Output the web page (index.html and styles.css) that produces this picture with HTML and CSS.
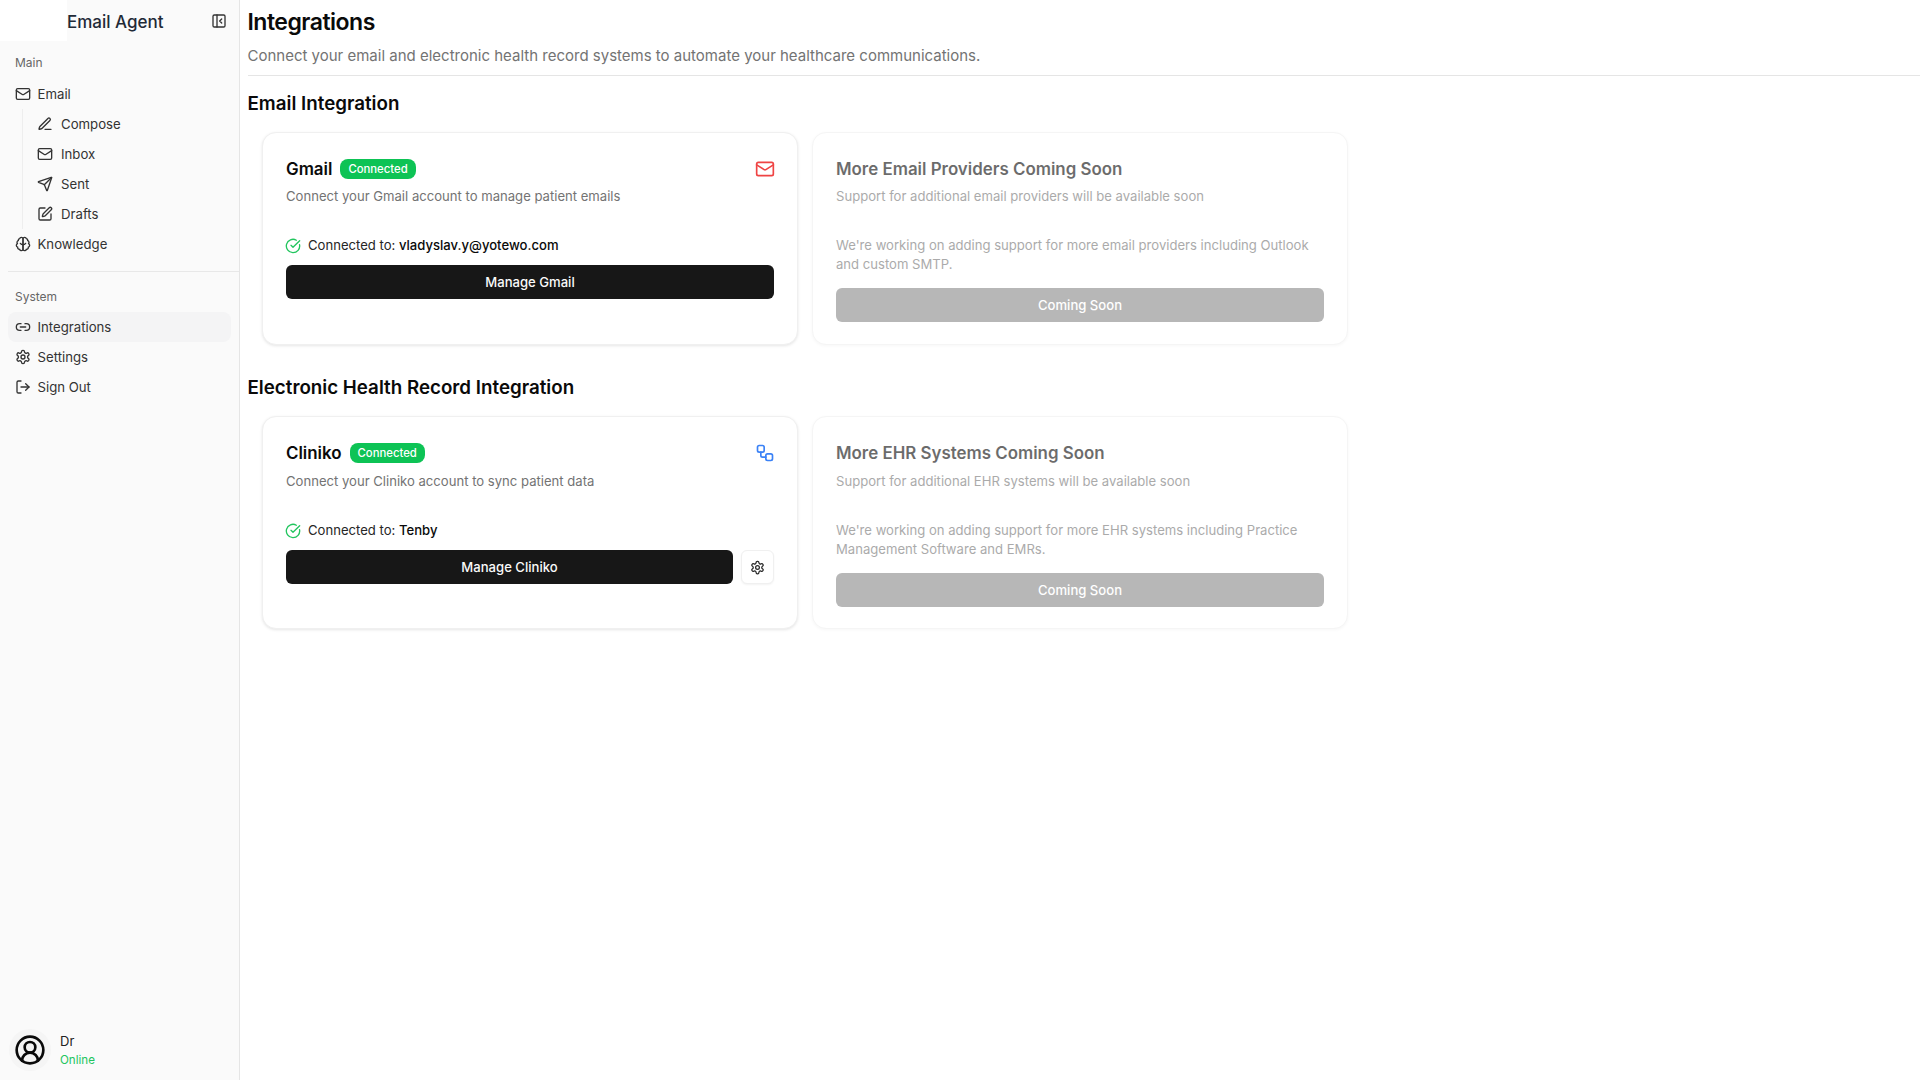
FILE: index.html
```html
<!DOCTYPE html>
<html lang="en">
<head>
<meta charset="utf-8">
<title>Integrations</title>
<link rel="stylesheet" href="styles.css">
</head>
<body>
<svg class="defs" aria-hidden="true">
<defs>
<symbol id="i-mail" viewBox="0 0 24 24"><rect x="2" y="4" width="20" height="16" rx="2"/><path d="m22 7-8.97 5.7a1.94 1.94 0 0 1-2.06 0L2 7"/></symbol>
<symbol id="i-pen" viewBox="0 0 24 24"><path d="M12 20h9"/><path d="M16.376 3.622a1 1 0 0 1 3.002 3.002L7.368 18.635a2 2 0 0 1-.855.506l-2.872.838a.5.5 0 0 1-.62-.62l.838-2.872a2 2 0 0 1 .506-.854z"/></symbol>
<symbol id="i-send" viewBox="0 0 24 24"><path d="M14.536 21.686a.5.5 0 0 0 .937-.024l6.5-19a.496.496 0 0 0-.635-.635l-19 6.5a.5.5 0 0 0-.024.937l7.93 3.18a2 2 0 0 1 1.112 1.11z"/><path d="m21.854 2.147-10.94 10.939"/></symbol>
<symbol id="i-square-pen" viewBox="0 0 24 24"><path d="M12 3H5a2 2 0 0 0-2 2v14a2 2 0 0 0 2 2h14a2 2 0 0 0 2-2v-7"/><path d="M18.375 2.625a1 1 0 0 1 3 3l-9.013 9.014a2 2 0 0 1-.853.505l-2.873.84a.5.5 0 0 1-.62-.62l.84-2.873a2 2 0 0 1 .506-.852z"/></symbol>
<symbol id="i-knowledge" viewBox="0 0 24 24"><path d="M9.5 2A2.5 2.5 0 0 1 12 4.5v15a2.5 2.5 0 0 1-4.96.44 2.5 2.5 0 0 1-2.96-3.08 3 3 0 0 1-.34-5.58 2.5 2.5 0 0 1 1.32-4.24 2.5 2.5 0 0 1 1.98-3A2.5 2.5 0 0 1 9.5 2Z"/><path d="M14.5 2A2.5 2.5 0 0 0 12 4.5v15a2.5 2.5 0 0 0 4.96.44 2.5 2.5 0 0 0 2.96-3.08 3 3 0 0 0 .34-5.58 2.5 2.5 0 0 0-1.32-4.24 2.5 2.5 0 0 0-1.98-3A2.5 2.5 0 0 0 14.5 2Z"/><path d="M12 13c-1.5 0-3-.6-4-2"/><path d="M12 13c1.5 0 3-.6 4-2"/></symbol>
<symbol id="i-link" viewBox="0 0 24 24"><path d="M9 17H7A5 5 0 0 1 7 7h2"/><path d="M15 7h2a5 5 0 1 1 0 10h-2"/><line x1="8" x2="16" y1="12" y2="12"/></symbol>
<symbol id="i-settings" viewBox="0 0 24 24"><path d="M12.22 2h-.44a2 2 0 0 0-2 2v.18a2 2 0 0 1-1 1.73l-.43.25a2 2 0 0 1-2 0l-.15-.08a2 2 0 0 0-2.73.73l-.22.38a2 2 0 0 0 .73 2.73l.15.1a2 2 0 0 1 1 1.72v.51a2 2 0 0 1-1 1.74l-.15.09a2 2 0 0 0-.73 2.73l.22.38a2 2 0 0 0 2.73.73l.15-.08a2 2 0 0 1 2 0l.43.25a2 2 0 0 1 1 1.73V20a2 2 0 0 0 2 2h.44a2 2 0 0 0 2-2v-.18a2 2 0 0 1 1-1.73l.43-.25a2 2 0 0 1 2 0l.15.08a2 2 0 0 0 2.73-.73l.22-.39a2 2 0 0 0-.73-2.73l-.15-.08a2 2 0 0 1-1-1.74v-.5a2 2 0 0 1 1-1.74l.15-.09a2 2 0 0 0 .73-2.73l-.22-.38a2 2 0 0 0-2.73-.73l-.15.08a2 2 0 0 1-2 0l-.43-.25a2 2 0 0 1-1-1.73V4a2 2 0 0 0-2-2z"/><circle cx="12" cy="12" r="3"/></symbol>
<symbol id="i-logout" viewBox="0 0 24 24"><path d="M9 21H5a2 2 0 0 1-2-2V5a2 2 0 0 1 2-2h4"/><polyline points="16 17 21 12 16 7"/><line x1="21" x2="9" y1="12" y2="12"/></symbol>
<symbol id="i-check" viewBox="0 0 24 24"><path d="M21.801 10A10 10 0 1 1 17 3.335"/><path d="m9 11 3 3L22 4"/></symbol>
<symbol id="i-workflow" viewBox="0 0 24 24"><rect x="3" y="3" width="8" height="8" rx="2"/><path d="M7 11v4a2 2 0 0 0 2 2h4"/><rect x="13" y="13" width="8" height="8" rx="2"/></symbol>
</defs>
</svg>
<div class="app">
  <aside class="sidebar">
    <header class="brand">
      <div class="logo-slot"></div>
      <span class="brand-name">Email Agent</span>
      <svg class="icon toggle" viewBox="0 0 24 24"><rect x="3" y="3" width="18" height="18" rx="2"/><path d="M9 3v18"/><path d="m16 15-3-3 3-3"/></svg>
    </header>
    <section class="nav-group">
      <div class="nav-label">Main</div>
      <a class="nav-item"><svg class="icon"><use href="#i-mail"/></svg>Email</a>
      <div class="sub-nav">
        <a class="nav-item"><svg class="icon"><use href="#i-pen"/></svg>Compose</a>
        <a class="nav-item"><svg class="icon"><use href="#i-mail"/></svg>Inbox</a>
        <a class="nav-item"><svg class="icon"><use href="#i-send"/></svg>Sent</a>
        <a class="nav-item"><svg class="icon"><use href="#i-square-pen"/></svg>Drafts</a>
      </div>
      <a class="nav-item"><svg class="icon"><use href="#i-knowledge"/></svg>Knowledge</a>
    </section>
    <div class="nav-sep"></div>
    <section class="nav-group system">
      <div class="nav-label">System</div>
      <a class="nav-item active"><svg class="icon"><use href="#i-link"/></svg>Integrations</a>
      <a class="nav-item"><svg class="icon"><use href="#i-settings"/></svg>Settings</a>
      <a class="nav-item"><svg class="icon"><use href="#i-logout"/></svg>Sign Out</a>
    </section>
    <footer class="user">
      <div class="avatar">
        <svg class="avatar-icon" viewBox="0 0 24 24"><circle cx="12" cy="12" r="10"/><circle cx="12" cy="10" r="4"/><path d="M18 20a6 6 0 0 0-12 0"/></svg>
      </div>
      <div class="user-text">
        <div class="user-name">Dr</div>
        <div class="user-status">Online</div>
      </div>
    </footer>
  </aside>
  <main class="main">
    <header class="page-head">
      <h1>Integrations</h1>
      <p>Connect your email and electronic health record systems to automate your healthcare communications.</p>
    </header>
    <section class="section">
      <h2>Email Integration</h2>
      <div class="cards">
        <article class="card">
          <div class="card-head">
            <div class="card-title"><h3>Gmail</h3><span class="badge">Connected</span></div>
            <svg class="icon brand-icon red"><use href="#i-mail"/></svg>
          </div>
          <p class="card-desc">Connect your Gmail account to manage patient emails</p>
          <div class="status"><svg class="icon check"><use href="#i-check"/></svg><span>Connected to: <span class="strong">vladyslav.y@yotewo.com</span></span></div>
          <div class="actions"><button class="btn">Manage Gmail</button></div>
        </article>
        <article class="card muted">
          <div class="card-head"><div class="card-title"><h3>More Email Providers Coming Soon</h3></div></div>
          <p class="card-desc">Support for additional email providers will be available soon</p>
          <p class="soon-text">We're working on adding support for more email providers including Outlook and custom SMTP.</p>
          <div class="actions"><button class="btn" disabled>Coming Soon</button></div>
        </article>
      </div>
    </section>
    <section class="section">
      <h2>Electronic Health Record Integration</h2>
      <div class="cards">
        <article class="card">
          <div class="card-head">
            <div class="card-title"><h3>Cliniko</h3><span class="badge">Connected</span></div>
            <svg class="icon brand-icon blue"><use href="#i-workflow"/></svg>
          </div>
          <p class="card-desc">Connect your Cliniko account to sync patient data</p>
          <div class="status"><svg class="icon check"><use href="#i-check"/></svg><span>Connected to: <span class="strong">Tenby</span></span></div>
          <div class="actions"><button class="btn">Manage Cliniko</button><button class="btn-icon"><svg class="icon"><use href="#i-settings"/></svg></button></div>
        </article>
        <article class="card muted">
          <div class="card-head"><div class="card-title"><h3>More EHR Systems Coming Soon</h3></div></div>
          <p class="card-desc">Support for additional EHR systems will be available soon</p>
          <p class="soon-text">We're working on adding support for more EHR systems including Practice Management Software and EMRs.</p>
          <div class="actions"><button class="btn" disabled>Coming Soon</button></div>
        </article>
      </div>
    </section>
  </main>
</div>
</body>
</html>
```
FILE: styles.css
```css
* { box-sizing: border-box; }
html, body { margin: 0; height: 100%; }
body { font-family: Inter, "Liberation Sans", sans-serif; color: #171717; background: #fff; overflow: hidden; }
.defs { position: absolute; width: 0; height: 0; }
.app { display: flex; height: 1080px; }
.icon { width: 16px; height: 16px; fill: none; stroke: currentColor; stroke-width: 2; stroke-linecap: round; stroke-linejoin: round; flex: none; }

.sidebar { width: 240px; flex: none; background: #fafafa; border-right: 1px solid #e5e5e5; display: flex; flex-direction: column; }
.brand { height: 41px; display: flex; align-items: center; position: relative; margin-bottom: 8px; }
.logo-slot { width: 67px; height: 41px; background: #fff; flex: none; }
.brand-name { font-size: 17px; font-weight: 500; color: #1f2a37; line-height: 24px; padding-top: 2px; }
.toggle { position: absolute; right: 12px; top: 13px; color: #333; }
.nav-group { padding: 0 8px; display: flex; flex-direction: column; }
.nav-label { font-size: 12px; line-height: 16px; color: #666; padding: 6px 7px 0; height: 30px; }
.system .nav-label { height: 29px; }
.nav-item { height: 30px; display: flex; align-items: center; gap: 6.5px; padding: 0 7px; font-size: 13.2px; color: #333; border-radius: 8px; }
.nav-item.active { background: #f4f4f5; }
.sub-nav { margin-left: 14px; padding-left: 7px; border-left: 1px solid #eeeeee; display: flex; flex-direction: column; }
.sub-nav .nav-item { gap: 8px; }
.nav-sep { height: 1px; background: #e8e8e8; margin: 12px 0 11px 8px; }
.user { margin-top: auto; height: 60px; display: flex; align-items: center; padding: 0 9px; gap: 9px; }
.avatar { width: 42px; height: 42px; border-radius: 50%; background: #f5f5f5; display: flex; align-items: center; justify-content: center; flex: none; }
.avatar-icon { width: 32px; height: 32px; fill: none; stroke: #0a0a0a; stroke-width: 2; stroke-linecap: round; stroke-linejoin: round; }
.user-name { font-size: 13px; line-height: 18px; color: #222; }
.user-status { font-size: 11.6px; line-height: 18px; margin-top: 1px; color: #22c55e; }

.main { flex: 1; padding: 0 0 0 7.5px; min-width: 0; }
.page-head { height: 76px; border-bottom: 1px solid #e5e5e5; }
.page-head h1 { margin: 0; font-size: 23px; line-height: 44px; font-weight: 600; color: #0a0a0a; letter-spacing: -0.5px; }
.page-head p { margin: 0; font-size: 15px; line-height: 24px; color: #737373; }
.section h2 { margin: 0; font-size: 18.75px; font-weight: 600; line-height: 28px; color: #0a0a0a; height: 56px; padding-top: 14px; }
.section + .section h2 { height: 71px; padding-top: 29px; }
.section + .section .card-desc { margin-top: 6px; }
.cards { display: grid; grid-template-columns: 536px 536px; gap: 14px; padding-left: 14.5px; }
.card { height: 213px; background: #fff; border: 1px solid #f0f0f0; border-radius: 14px; padding: 24px 23px 23px; box-shadow: 0 1px 3px rgba(0,0,0,.1); display: flex; flex-direction: column; }
.card-head { display: flex; align-items: center; justify-content: space-between; height: 24px; }
.card-title { display: flex; align-items: center; gap: 8px; }
.card h3 { margin: 0; font-size: 16.9px; line-height: 24px; font-weight: 600; color: #0a0a0a; }
.badge { background: #0dc355; color: #fff; font-size: 11.3px; font-weight: 500; line-height: 16px; padding: 2px 8px; border-radius: 8px; }
.brand-icon { width: 20px; height: 20px; margin-right: -1px; }
.red { color: #ef4444; }
.blue { color: #3b82f6; }
.card-desc { margin: 5px 0 0; font-size: 13.1px; line-height: 20px; color: #737373; }
.status { margin-top: 29px; display: flex; align-items: center; gap: 7px; font-size: 13.1px; line-height: 20px; color: #262626; height: 20px; }
.strong { color: #0a0a0a; font-weight: 500; }
.check { color: #22c55e; margin-top: 2px; margin-left: -1px; }
.actions { margin-top: 10px; display: flex; gap: 8px; }
.btn { flex: 1; height: 34px; border: 0; border-radius: 6px; background: #171717; color: #fafafa; font: 500 13.1px Inter, sans-serif; }
.btn-icon { width: 33px; height: 34px; flex: none; display: flex; align-items: center; justify-content: center; background: #fff; border: 1px solid #f0f0f0; border-radius: 6px; box-shadow: 0 1px 2px rgba(0,0,0,.05); color: #262626; padding: 0; }
.btn-icon .icon { width: 15px; height: 15px; }
.card.muted { opacity: .62; box-shadow: 0 1px 3px rgba(0,0,0,.05); }
.muted .card-desc, .muted .soon-text { color: #777; }
.soon-text { margin: 30px 0 0; font-size: 13.1px; line-height: 18.5px; }
.muted h3 { color: #111; }
.muted .actions { margin-top: 15px; }
.muted .btn { background: #8c8c8c; color: #fff; }
```
